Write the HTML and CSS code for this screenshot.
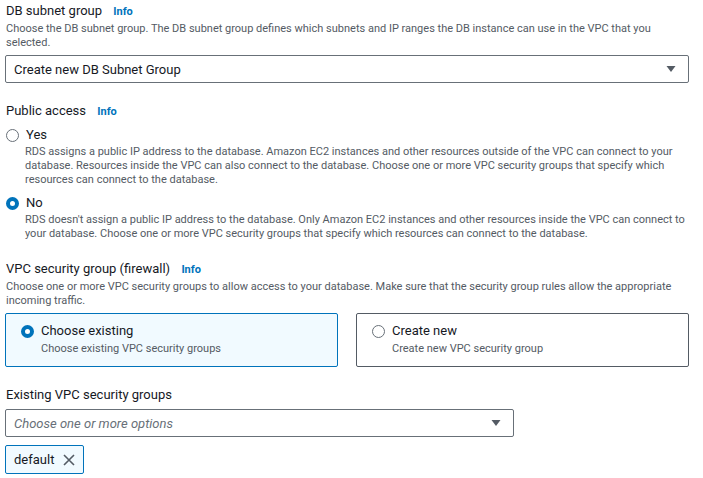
FILE: index.html
```html
<!DOCTYPE html>
<html lang="en">
<head>
<meta charset="utf-8">
<title>Connectivity</title>
<link rel="stylesheet" href="styles.css">
</head>
<body>
<div class="page">
  <section class="field">
    <div class="label">DB subnet group <span class="info">Info</span></div>
    <div class="desc">Choose the DB subnet group. The DB subnet group defines which subnets and IP ranges the DB instance can use in the VPC that you selected.</div>
    <div class="select full">
      <span class="value">Create new DB Subnet Group</span>
      <svg class="caret" width="10" height="8" viewBox="0 0 10 8"><path d="M0.5 1 L9.5 1 L5 7 Z" fill="#545b64"/></svg>
    </div>
  </section>

  <section class="field">
    <div class="label">Public access <span class="info">Info</span></div>
    <div class="radio-group">
      <div class="radio-item">
        <div class="radio-row"><span class="radio"></span><span class="radio-label">Yes</span></div>
        <div class="desc indent">RDS assigns a public IP address to the database. Amazon EC2 instances and other resources outside of the VPC can connect to your database. Resources inside the VPC can also connect to the database. Choose one or more VPC security groups that specify which resources can connect to the database.</div>
      </div>
      <div class="radio-item">
        <div class="radio-row"><span class="radio checked"></span><span class="radio-label">No</span></div>
        <div class="desc indent">RDS doesn't assign a public IP address to the database. Only Amazon EC2 instances and other resources inside the VPC can connect to your database. Choose one or more VPC security groups that specify which resources can connect to the database.</div>
      </div>
    </div>
  </section>

  <section class="field">
    <div class="label">VPC security group (firewall) <span class="info">Info</span></div>
    <div class="desc">Choose one or more VPC security groups to allow access to your database. Make sure that the security group rules allow the appropriate incoming traffic.</div>
    <div class="tiles">
      <div class="tile selected">
        <div class="radio-row"><span class="radio checked"></span><span class="radio-label">Choose existing</span></div>
        <div class="tile-desc">Choose existing VPC security groups</div>
      </div>
      <div class="tile">
        <div class="radio-row"><span class="radio"></span><span class="radio-label">Create new</span></div>
        <div class="tile-desc">Create new VPC security group</div>
      </div>
    </div>
  </section>

  <section class="field">
    <div class="label">Existing VPC security groups</div>
    <div class="select half">
      <span class="placeholder">Choose one or more options</span>
      <svg class="caret" width="10" height="8" viewBox="0 0 10 8"><path d="M0.5 1 L9.5 1 L5 7 Z" fill="#545b64"/></svg>
    </div>
    <div class="tokens">
      <div class="token">
        <span>default</span>
        <svg width="12" height="12" viewBox="0 0 12 12"><path d="M1 1 L11 11 M11 1 L1 11" stroke="#545b64" stroke-width="1.6" fill="none"/></svg>
      </div>
    </div>
  </section>
</div>
</body>
</html>
```

FILE: styles.css
```css
* { box-sizing: border-box; }
html, body { margin: 0; padding: 0; background: #fff; }
body {
  font-family: Roboto, "Liberation Sans", sans-serif;
  color: #16191f;
}
.page {
  width: 684px;
  margin-left: 5px;
  padding-top: 3px;
  display: flex;
  flex-direction: column;
  gap: 20px;
}
.field { display: flex; flex-direction: column; }
.label {
  font-size: 13px;
  line-height: 16px;
  padding-left: 1px;
}
.info {
  color: #0073bb;
  font-weight: bold;
  font-size: 11px;
  margin-left: 8px;
}
.desc {
  font-size: 11px;
  line-height: 14px;
  color: #545b64;
  margin-top: 2px;
  padding-left: 1px;
}
.desc.indent { padding-left: 20px; margin-top: 2px; }
.select {
  margin-top: 5px;
  height: 28px;
  border: 1px solid #687078;
  border-radius: 2px;
  display: flex;
  align-items: center;
  justify-content: space-between;
  padding: 0 12px 0 8px;
  font-size: 13px;
}
.select.half { width: 509px; margin-top: 6px; }
.placeholder { font-style: italic; color: #687078; }
.radio-group { display: flex; flex-direction: column; gap: 8px; margin-top: 7px; }
.radio-row { display: flex; align-items: center; gap: 7px; height: 16px; }
.radio {
  width: 13px; height: 13px;
  border-radius: 50%;
  border: 1px solid #687078;
  background: #fff;
  flex: none;
  margin-left: 1px;
}
.radio.checked { border: 4px solid #0073bb; }
.radio-label { font-size: 13px; line-height: 16px; }
.tiles {
  margin-top: 5px;
  display: grid;
  grid-template-columns: 333px 333px;
  column-gap: 18px;
}
.tile {
  height: 54px;
  border: 1px solid #545b64;
  border-radius: 2px;
  padding: 9px 14px;
}
.tile.selected { border-color: #0073bb; background: #f1faff; }
.tile-desc {
  font-size: 11px;
  line-height: 14px;
  color: #545b64;
  padding-left: 21px;
  margin-top: 3px;
}
.tokens { margin-top: 8px; display: flex; }
.token {
  height: 29px;
  width: 79px;
  border: 1px solid #0073bb;
  border-radius: 2px;
  background: #f1faff;
  display: flex;
  align-items: center;
  gap: 9px;
  padding-left: 8px;
  font-size: 13px;
}
```
